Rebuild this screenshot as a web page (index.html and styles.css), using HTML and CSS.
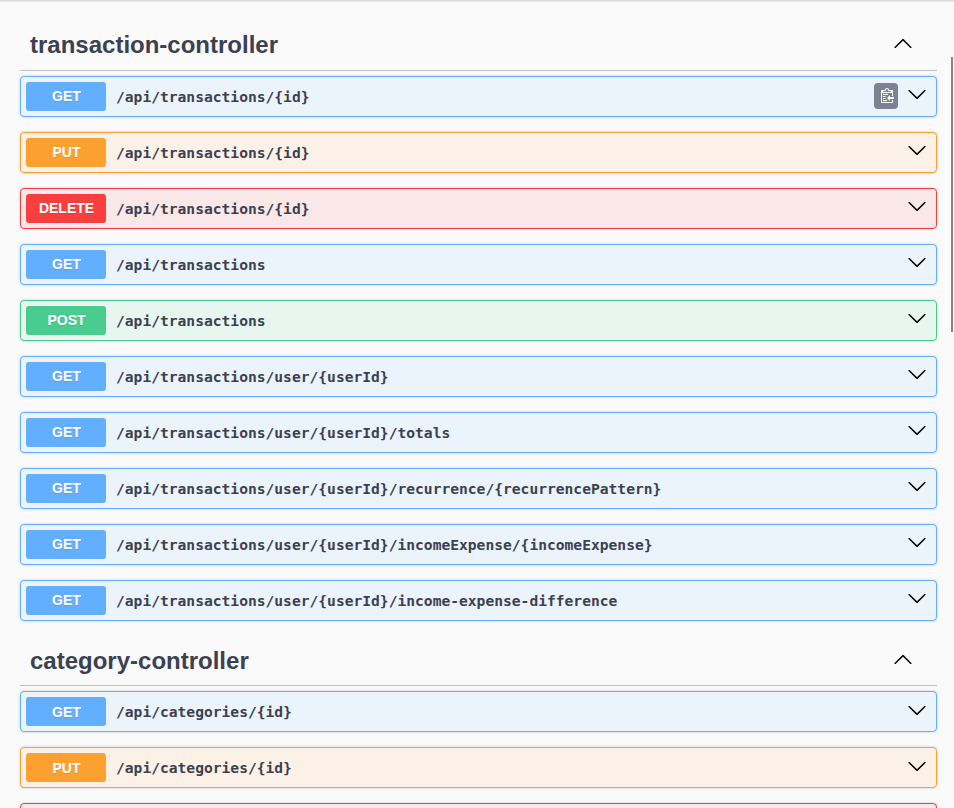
FILE: index.html
```html
<!DOCTYPE html>
<html lang="en">
<head>
<meta charset="utf-8">
<title>API documentation</title>
<link rel="stylesheet" href="styles.css">
</head>
<body>
<svg class="defs" width="0" height="0">
  <symbol id="arrow" viewBox="0 0 20 20"><path d="M17.418 6.109c.272-.268.709-.268.979 0s.271.701 0 .969l-7.908 7.83c-.27.268-.707.268-.979 0l-7.908-7.83c-.27-.268-.27-.701 0-.969.271-.268.709-.268.979 0L10 13.25l7.418-7.141z"/></symbol>
</svg>
<main class="page">
  <section class="tag">
    <h3 class="tag-header"><span>transaction-controller</span><svg class="arrow up"><use href="#arrow"/></svg></h3>
    <div class="op get"><span class="method">GET</span><span class="path">/api/transactions/{id}</span>
      <span class="copy"><svg width="15" height="16" viewBox="0 0 15 16"><g transform="translate(2 -1)"><path fill="#fff" fill-rule="evenodd" d="M2 13h4v1H2v-1zm5-6H2v1h5V7zm2 3V8l-3 3 3 3v-2h5v-2H9zM4.5 9H2v1h2.5V9zM2 12h2.5v-1H2v1zm9 1h1v2c-.02.28-.11.52-.3.7-.19.18-.42.28-.7.3H1c-.55 0-1-.45-1-1V4c0-.55.45-1 1-1h3c0-1.11.89-2 2-2 1.11 0 2 .89 2 2h3c.55 0 1 .45 1 1v5h-1V6H1v9h10v-2zM2 5h8c0-.55-.45-1-1-1H8c-.55 0-1-.45-1-1s-.45-1-1-1-1 .45-1 1-.45 1-1 1H3c-.55 0-1 .45-1 1z"/></g></svg></span>
      <svg class="arrow"><use href="#arrow"/></svg></div>
    <div class="op put"><span class="method">PUT</span><span class="path">/api/transactions/{id}</span><svg class="arrow"><use href="#arrow"/></svg></div>
    <div class="op delete"><span class="method">DELETE</span><span class="path">/api/transactions/{id}</span><svg class="arrow"><use href="#arrow"/></svg></div>
    <div class="op get"><span class="method">GET</span><span class="path">/api/transactions</span><svg class="arrow"><use href="#arrow"/></svg></div>
    <div class="op post"><span class="method">POST</span><span class="path">/api/transactions</span><svg class="arrow"><use href="#arrow"/></svg></div>
    <div class="op get"><span class="method">GET</span><span class="path">/api/transactions/user/{userId}</span><svg class="arrow"><use href="#arrow"/></svg></div>
    <div class="op get"><span class="method">GET</span><span class="path">/api/transactions/user/{userId}/totals</span><svg class="arrow"><use href="#arrow"/></svg></div>
    <div class="op get"><span class="method">GET</span><span class="path">/api/transactions/user/{userId}/recurrence/{recurrencePattern}</span><svg class="arrow"><use href="#arrow"/></svg></div>
    <div class="op get"><span class="method">GET</span><span class="path">/api/transactions/user/{userId}/incomeExpense/{incomeExpense}</span><svg class="arrow"><use href="#arrow"/></svg></div>
    <div class="op get"><span class="method">GET</span><span class="path">/api/transactions/user/{userId}/income-expense-difference</span><svg class="arrow"><use href="#arrow"/></svg></div>
  </section>
  <section class="tag">
    <h3 class="tag-header"><span>category-controller</span><svg class="arrow up"><use href="#arrow"/></svg></h3>
    <div class="op get"><span class="method">GET</span><span class="path">/api/categories/{id}</span><svg class="arrow"><use href="#arrow"/></svg></div>
    <div class="op put"><span class="method">PUT</span><span class="path">/api/categories/{id}</span><svg class="arrow"><use href="#arrow"/></svg></div>
    <div class="op delete"></div>
  </section>
</main>
<div class="scroll-thumb"></div>
</body>
</html>
```
FILE: styles.css
```css
* { box-sizing: border-box; }
html, body { height: 100%; }
body {
  margin: 0;
  background: #fafafa;
  color: #3b4151;
  font-family: "Liberation Sans", Arial, sans-serif;
  overflow: hidden;
}
.defs { display: block; height: 0; }
.page {
  height: 808px;
  overflow: hidden;
  border-top: 1px solid #dcdcdc;
  box-shadow: inset 0 1px 0 #ebebeb;
  padding: 19px 17px 0 20px;
}
.tag-header {
  display: flex;
  align-items: center;
  justify-content: space-between;
  height: 51px;
  margin: 0 0 5px;
  padding: 0 24px 0 10px;
  border-bottom: 1px solid rgba(59, 65, 81, .3);
  font-size: 24px;
  line-height: 28px;
}
.tag + .tag .tag-header { height: 50px; }
.arrow { width: 20px; height: 20px; flex: none; fill: #000; }
.arrow.up { transform: rotate(180deg); position: relative; top: -1px; }
.op {
  display: flex;
  align-items: center;
  height: 41px;
  margin-bottom: 15px;
  padding: 5px 9px 5px 5px;
  border: 1px solid;
  border-radius: 4px;
  box-shadow: 0 0 3px rgba(0, 0, 0, .19);
}
.method {
  width: 80px;
  height: 29px;
  padding-left: 1px;
  line-height: 29px;
  border-radius: 3px;
  color: #fff;
  font-size: 14px;
  font-weight: 700;
  text-align: center;
  text-shadow: 0 1px 0 rgba(0, 0, 0, .1);
}
.path {
  flex: 1;
  padding: 0 10px;
  font: 700 14.62px/20px "DejaVu Sans Mono", monospace;
  white-space: nowrap;
}
.op .arrow { margin-top: -5px; }
.tag + .tag .method { line-height: 31px; }
.tag + .tag .op .arrow { margin-top: -3px; }
.copy {
  display: flex;
  align-items: center;
  justify-content: center;
  width: 24px;
  height: 26px;
  margin: -1px 9px 0 0;
  border-radius: 4px;
  background: #7d8293;
}
.get { border-color: #61affe; background: #ebf3fb; }
.get .method { background: #61affe; }
.put { border-color: #fca130; background: #fbf1e6; }
.put .method { background: #fca130; }
.delete { border-color: #f93e3e; background: #fae7e7; }
.delete .method { background: #f93e3e; }
.post { border-color: #49cc90; background: #e8f6f0; }
.post .method { background: #49cc90; }
.scroll-thumb {
  position: absolute;
  top: 57px;
  right: 1px;
  width: 2px;
  height: 275px;
  background: #858585;
}
```
